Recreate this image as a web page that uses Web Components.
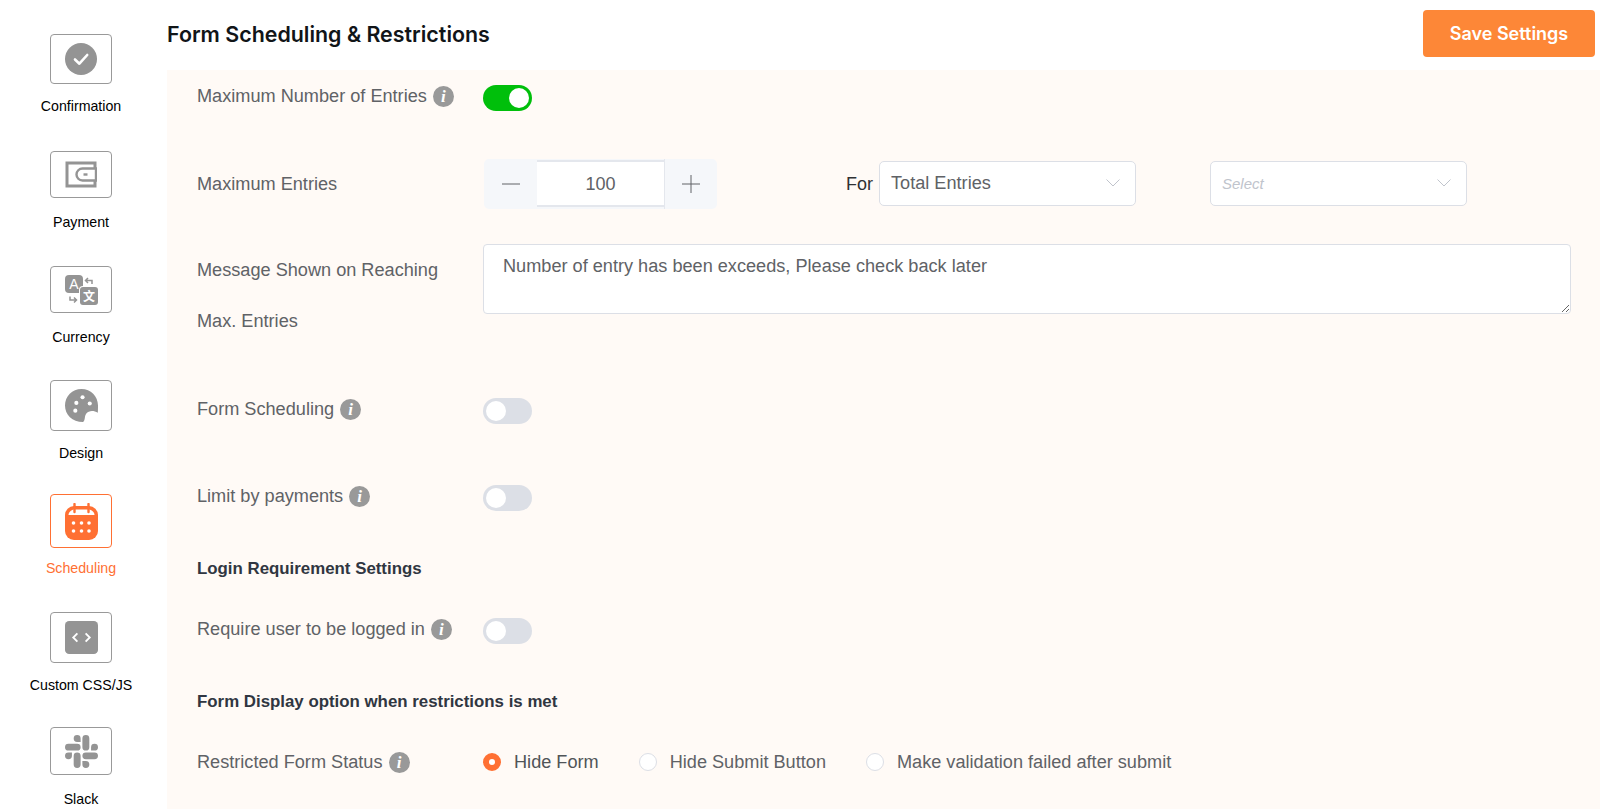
<!DOCTYPE html>
<html lang="en">
<head>
<meta charset="utf-8">
<title>Form Scheduling &amp; Restrictions</title>
<style>
  html, body { margin: 0; height: 809px; overflow: hidden; background: #fff; }
  body { font-family: "Liberation Sans", Arial, sans-serif; }
  .page { display: flex; height: 809px; }
</style>
</head>
<body>
<div class="page">
  <side-nav>
    <nav-item label="Confirmation" tile="50" gap="12" height="117">
      <svg width="32" height="32" viewBox="0 0 32 32"><circle cx="16" cy="16" r="16" fill="#949494"/><path d="M10 16.500l4.400 4.200L22.200 12" fill="none" stroke="#fff" stroke-width="2.600" stroke-linecap="round" stroke-linejoin="round"/></svg>
    </nav-item>
    <nav-item label="Payment" tile="47" gap="14" height="115">
      <svg width="32" height="27" viewBox="0 0 32 27" fill="none" stroke="#949494"><path d="M30 7V2H2v23h28v-5" stroke-width="3"/><path d="M31 7.500H17.500a6 6 0 0 0 0 12H31z" stroke-width="2.400"/><path d="M18.500 13.500h4" stroke-width="2.400"/></svg>
    </nav-item>
    <nav-item label="Currency" tile="47" gap="14" height="114">
      <svg width="33" height="30" viewBox="0 0 33 30">
        <rect x="0" y="0" width="18" height="18" rx="4" fill="#949494"/>
        <text x="9" y="14" text-anchor="middle" font-size="14" fill="#fff" font-family="Liberation Sans">A</text>
        <rect x="14" y="11" width="19" height="19" rx="4" fill="#fff"/>
        <rect x="15" y="12" width="18" height="18" rx="3" fill="#949494"/>
        <text x="24" y="25.500" text-anchor="middle" font-size="12" font-weight="700" fill="#fff" font-family="Noto Sans CJK SC">文</text>
        <path d="M27 9V5.500h-6M23 3l-2.500 2.500L23 8M5 21.500V25h6M9 27.500l2.500-2.500L9 22.500" fill="none" stroke="#949494" stroke-width="1.500"/>
      </svg>
    </nav-item>
    <nav-item label="Design" tile="51" gap="12" height="114">
      <svg width="33" height="33" viewBox="0 0 32 32"><path d="M16 0c9 0 16 7 16 16 0 2.500 0 5-.2 7C28 20.500 23 20.500 20.500 24 18.500 27 20 30 17.500 32 7 32 0 25 0 16 0 7 7 0 16 0z" fill="#949494"/><g fill="#fff"><circle cx="11" cy="13.500" r="2"/><circle cx="17" cy="8" r="2"/><circle cx="24" cy="14" r="2"/><circle cx="10" cy="21" r="2"/></g></svg>
    </nav-item>
    <nav-item label="Scheduling" tile="54" gap="10" height="118" active>
      <svg width="33" height="37" viewBox="0 0 33 37"><rect x="0" y="3" width="33" height="34" rx="9" fill="#ff7033"/><path d="M3.500 12c0-3 3-5.500 6-5.500h14c3 0 6 2.500 6 5.500z" fill="#fff"/><path d="M9.500 1v8M23.500 1v8" stroke="#ff7033" stroke-width="2.400" stroke-linecap="round"/><g fill="#fff"><circle cx="8.500" cy="20" r="1.800"/><circle cx="16.500" cy="20" r="1.800"/><circle cx="24" cy="20" r="1.800"/><circle cx="8.500" cy="28" r="1.800"/><circle cx="16.500" cy="28" r="1.800"/><circle cx="24" cy="28" r="1.800"/></g></svg>
    </nav-item>
    <nav-item label="Custom CSS/JS" tile="51" gap="12" height="115">
      <svg width="33" height="33" viewBox="0 0 32 32"><rect width="32" height="32" rx="4" fill="#949494"/><path d="M12 12l-4 4 4 4M20 12l4 4-4 4" fill="none" stroke="#fff" stroke-width="1.800"/></svg>
    </nav-item>
    <nav-item label="Slack" tile="52" gap="14" height="82">
      <svg width="33" height="33" viewBox="0 0 24 24"><path fill="#949494" d="M5.042 15.165a2.528 2.528 0 0 1-2.52 2.523A2.528 2.528 0 0 1 0 15.165a2.527 2.527 0 0 1 2.522-2.52h2.52v2.52zM6.313 15.165a2.527 2.527 0 0 1 2.521-2.52 2.527 2.527 0 0 1 2.521 2.52v6.313A2.528 2.528 0 0 1 8.834 24a2.528 2.528 0 0 1-2.521-2.522v-6.313zM8.834 5.042a2.528 2.528 0 0 1-2.521-2.52A2.528 2.528 0 0 1 8.834 0a2.528 2.528 0 0 1 2.521 2.522v2.52H8.834zM8.834 6.313a2.528 2.528 0 0 1 2.521 2.521 2.528 2.528 0 0 1-2.521 2.521H2.522A2.528 2.528 0 0 1 0 8.834a2.528 2.528 0 0 1 2.522-2.521h6.312zM18.956 8.834a2.528 2.528 0 0 1 2.522-2.521A2.528 2.528 0 0 1 24 8.834a2.528 2.528 0 0 1-2.522 2.521h-2.522V8.834zM17.688 8.834a2.528 2.528 0 0 1-2.523 2.521 2.527 2.527 0 0 1-2.52-2.521V2.522A2.527 2.527 0 0 1 15.165 0a2.528 2.528 0 0 1 2.523 2.522v6.312zM15.165 18.956a2.528 2.528 0 0 1 2.523 2.522A2.528 2.528 0 0 1 15.165 24a2.527 2.527 0 0 1-2.52-2.522v-2.522h2.52zM15.165 17.688a2.527 2.527 0 0 1-2.52-2.523 2.526 2.526 0 0 1 2.52-2.52h6.313A2.527 2.527 0 0 1 24 15.165a2.528 2.528 0 0 1-2.522 2.523h-6.313z"/></svg>
    </nav-item>
  </side-nav>

  <settings-page heading="Form Scheduling &amp; Restrictions">
    <setting-row top="15" height="26" shift="-2">
      <span slot="label">Maximum Number of Entries <info-tip></info-tip></span>
      <toggle-switch on></toggle-switch>
    </setting-row>

    <setting-row top="48" height="50">
      <span slot="label">Maximum Entries</span>
      <div style="display:flex;align-items:center;height:50px">
        <num-stepper value="100"></num-stepper>
        <span style="margin-left:129px;margin-right:6px;font-size:18px;color:#303133">For</span>
        <select-box value="Total Entries"></select-box>
        <select-box placeholder="Select" style="margin-left:74px"></select-box>
      </div>
    </setting-row>

    <setting-row top="35" height="102" align="start">
      <span slot="label" style="display:block;line-height:51px;padding-top:1px">Message Shown on Reaching<br>Max. Entries</span>
      <text-area-box>Number of entry has been exceeds, Please check back later</text-area-box>
    </setting-row>

    <setting-row top="52" height="26" shift="-2">
      <span slot="label">Form Scheduling <info-tip></info-tip></span>
      <toggle-switch></toggle-switch>
    </setting-row>

    <setting-row top="61" height="26" shift="-2">
      <span slot="label">Limit by payments <info-tip></info-tip></span>
      <toggle-switch></toggle-switch>
    </setting-row>

    <section-title top="48">Login Requirement Settings</section-title>

    <setting-row top="39" height="26" shift="-2">
      <span slot="label">Require user to be logged in <info-tip></info-tip></span>
      <toggle-switch></toggle-switch>
    </setting-row>

    <section-title top="48">Form Display option when restrictions is met</section-title>

    <setting-row top="37" height="26">
      <span slot="label">Restricted Form Status <info-tip></info-tip></span>
      <div style="display:flex;align-items:center;gap:40px">
        <radio-option label="Hide Form" checked></radio-option>
        <radio-option label="Hide Submit Button"></radio-option>
        <radio-option label="Make validation failed after submit"></radio-option>
      </div>
    </setting-row>
  </settings-page>
</div>

<script>
class SideNav extends HTMLElement {
    constructor() {
        super();
        this.attachShadow({ mode: 'open' });
        this.shadowRoot.innerHTML = `
            <style>
                :host { display: flex; flex-direction: column; align-items: center; width: 162px; flex: 0 0 162px; padding: 34px 5px 0 0; box-sizing: content-box; }
            </style>
            <slot></slot>
        `;
    }
}

class NavItem extends HTMLElement {
    constructor() {
        super();
        this.attachShadow({ mode: 'open' });
        const label = this.getAttribute('label') || '';
        const tile = this.getAttribute('tile') || 50;
        const gap = this.getAttribute('gap') || 12;
        const height = this.getAttribute('height') || 115;
        this.shadowRoot.innerHTML = `
            <style>
                :host { display: flex; flex-direction: column; align-items: center; height: ${height}px; flex: none; color: #000; }
                .tile { width: 62px; height: ${tile}px; box-sizing: border-box; border: 1px solid #999; border-radius: 4px; display: flex; align-items: center; justify-content: center; }
                .label { margin-top: ${gap}px; font-size: 14.200px; line-height: 20px; white-space: nowrap; }
                :host([active]) { color: #ff7033; }
                :host([active]) .tile { border-color: #ff7033; }
                ::slotted(svg) { display: block; }
            </style>
            <div class="tile"><slot></slot></div>
            <div class="label">${label}</div>
        `;
    }
}

class SettingsPage extends HTMLElement {
    constructor() {
        super();
        this.attachShadow({ mode: 'open' });
        const heading = this.getAttribute('heading') || '';
        this.shadowRoot.innerHTML = `
            <style>
                :host { display: flex; flex-direction: column; flex: 1; min-width: 0; height: 809px; }
                header { display: flex; justify-content: space-between; align-items: center; height: 70px; box-sizing: border-box; padding: 0 5px 3px 0; flex: none; }
                h1 { margin: 0; font: 600 21.400px Inter, sans-serif; color: #111518; }
                button { width: 172px; height: 47px; border: 0; border-radius: 4px; background: #fd8737; color: #fff; font: 600 18px Inter, sans-serif; }
                .panel { flex: 1; background: #fffaf6; padding: 0 29px 0 30px; color: #606266; font-size: 18.150px; }
            </style>
            <header>
                <h1>${heading}</h1>
                <button>Save Settings</button>
            </header>
            <div class="panel"><slot></slot></div>
        `;
    }
}

class SettingRow extends HTMLElement {
    constructor() {
        super();
        this.attachShadow({ mode: 'open' });
        const top = this.getAttribute('top') || 0;
        const height = this.getAttribute('height') || 26;
        const shift = this.getAttribute('shift') || 0;
        const align = this.getAttribute('align') || 'center';
        this.shadowRoot.innerHTML = `
            <style>
                :host { display: grid; grid-template-columns: 286px 1fr; align-items: ${align}; height: ${height}px; margin-top: ${top}px; }
                .label { margin-top: ${shift * 2}px; white-space: nowrap; }
            </style>
            <div class="label"><slot name="label"></slot></div>
            <div class="control"><slot></slot></div>
        `;
    }
}

class SectionTitle extends HTMLElement {
    constructor() {
        super();
        this.attachShadow({ mode: 'open' });
        const top = this.getAttribute('top') || 0;
        this.shadowRoot.innerHTML = `
            <style>
                :host { display: block; margin-top: ${top}px; font-size: 16.850px; line-height: 20px; font-weight: 700; color: #303641; }
            </style>
            <slot></slot>
        `;
    }
}

class InfoTip extends HTMLElement {
    constructor() {
        super();
        this.attachShadow({ mode: 'open' });
        this.shadowRoot.innerHTML = `
            <style>
                :host { display: inline-flex; width: 21px; height: 21px; border-radius: 50%; background: #999; color: #fff; align-items: center; justify-content: center; vertical-align: 0; margin-left: 1px; font: italic 700 17px/21px "Liberation Serif", serif; }
            </style>
            i
        `;
    }
}

class ToggleSwitch extends HTMLElement {
    constructor() {
        super();
        this.attachShadow({ mode: 'open' });
        this.shadowRoot.innerHTML = `
            <style>
                :host { display: block; width: 49px; height: 26px; border-radius: 13px; background: #dcdfe6; position: relative; }
                :host([on]) { background: #00bf0b; }
                i { position: absolute; top: 3px; left: 3px; width: 20px; height: 20px; border-radius: 50%; background: #fff; }
                :host([on]) i { left: 26px; }
            </style>
            <i></i>
        `;
    }
}

class NumStepper extends HTMLElement {
    constructor() {
        super();
        this.attachShadow({ mode: 'open' });
        const value = this.getAttribute('value') || '';
        this.shadowRoot.innerHTML = `
            <style>
                :host { display: flex; width: 233px; height: 50px; margin-left: 1px; border-radius: 5px; background: #f5f7fa; overflow: hidden; flex: none; }
                .btn { width: 53px; flex: none; box-sizing: border-box; display: flex; align-items: center; justify-content: center; }
                .btn:first-child { border-right: 1px solid #e4e7ed; }
                .btn:last-child { border-left: 1px solid #e4e7ed; }
                .btn svg { display: block; }
                .val { flex: 1; box-sizing: border-box; height: 47px; margin-top: 1px; padding-top: 2px; background: #fff; border-top: 2px solid #e4e7ed; border-bottom: 2px solid #e4e7ed; display: flex; align-items: center; justify-content: center; font-size: 18px; color: #606266; }
            </style>
            <div class="btn"><svg width="18" height="18" viewBox="0 0 18 18"><path d="M0 9h18" stroke="#606266" stroke-width="1"/></svg></div>
            <div class="val">${value}</div>
            <div class="btn"><svg width="18" height="18" viewBox="0 0 18 18"><path d="M0 9h18M9 0v18" stroke="#606266" stroke-width="1"/></svg></div>
        `;
    }
}

class SelectBox extends HTMLElement {
    constructor() {
        super();
        this.attachShadow({ mode: 'open' });
        const value = this.getAttribute('value');
        const placeholder = this.getAttribute('placeholder');
        this.shadowRoot.innerHTML = `
            <style>
                :host { display: flex; align-items: center; justify-content: space-between; box-sizing: border-box; width: 257px; height: 45px; margin-top: -2px; padding: 0 15px 0 11px; background: #fff; border: 1px solid #dcdfe6; border-radius: 5px; flex: none; }
                .v { font-size: 18.150px; color: #606266; padding-top: 1px; }
                .p { font-size: 15px; font-style: italic; color: #c0c4cc; padding-top: 1px; }
                svg { display: block; }
            </style>
            <span class="${value ? 'v' : 'p'}">${value || placeholder}</span>
            <svg width="14" height="8" viewBox="0 0 14 8"><path d="M.5.5L7 7 13.500.5" fill="none" stroke="#c0c4cc" stroke-width="1"/></svg>
        `;
    }
}

class TextAreaBox extends HTMLElement {
    constructor() {
        super();
        this.attachShadow({ mode: 'open' });
        this.shadowRoot.innerHTML = `
            <style>
                :host { display: block; }
                .ta { box-sizing: border-box; height: 70px; width: 1088px; padding: 11px 19px; background: #fff; border: 1px solid #dcdfe6; border-radius: 4px; font-size: 18.150px; line-height: 20px; color: #606266; resize: both; overflow: auto; }
            </style>
            <div class="ta"><slot></slot></div>
        `;
    }
}

class RadioOption extends HTMLElement {
    constructor() {
        super();
        this.attachShadow({ mode: 'open' });
        const label = this.getAttribute('label') || '';
        this.shadowRoot.innerHTML = `
            <style>
                :host { display: inline-flex; align-items: center; gap: 13px; font-size: 18.150px; color: #606266; white-space: nowrap; }
                i { width: 18px; height: 18px; box-sizing: border-box; border-radius: 50%; border: 1px solid #dcdfe6; background: #fff; }
                :host([checked]) i { border: 6px solid #ff7033; }
                :host([checked]) { color: #505458; }
            </style>
            <i></i><span>${label}</span>
        `;
    }
}

customElements.define('side-nav', SideNav);
customElements.define('nav-item', NavItem);
customElements.define('settings-page', SettingsPage);
customElements.define('setting-row', SettingRow);
customElements.define('section-title', SectionTitle);
customElements.define('info-tip', InfoTip);
customElements.define('toggle-switch', ToggleSwitch);
customElements.define('num-stepper', NumStepper);
customElements.define('select-box', SelectBox);
customElements.define('text-area-box', TextAreaBox);
customElements.define('radio-option', RadioOption);
</script>
</body>
</html>
